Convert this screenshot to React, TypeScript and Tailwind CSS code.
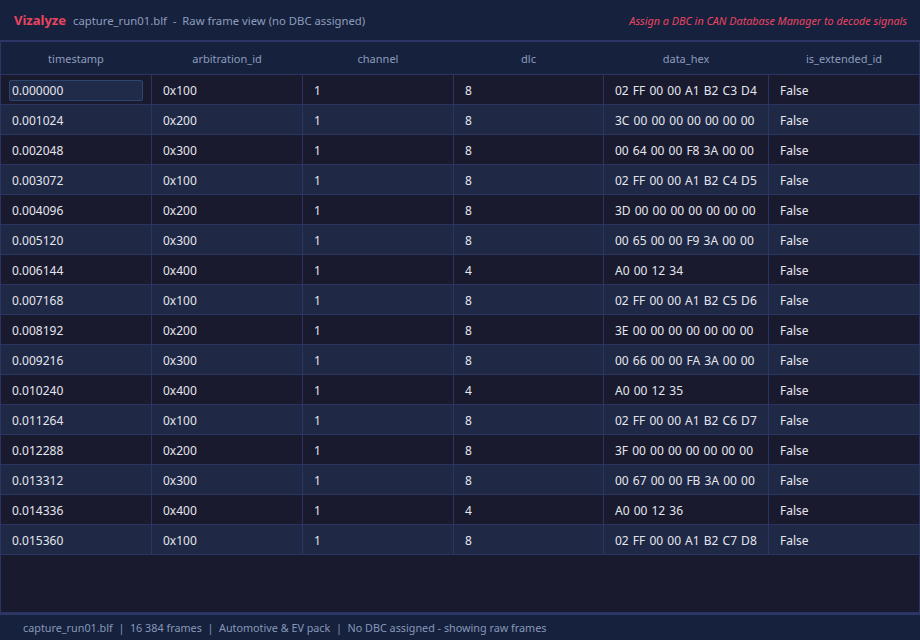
import React from "react";

const rows: [string, string, string, string, string, string][] = [
  ["0.000000", "0x100", "1", "8", "02 FF 00 00 A1 B2 C3 D4", "False"],
  ["0.001024", "0x200", "1", "8", "3C 00 00 00 00 00 00 00", "False"],
  ["0.002048", "0x300", "1", "8", "00 64 00 00 F8 3A 00 00", "False"],
  ["0.003072", "0x100", "1", "8", "02 FF 00 00 A1 B2 C4 D5", "False"],
  ["0.004096", "0x200", "1", "8", "3D 00 00 00 00 00 00 00", "False"],
  ["0.005120", "0x300", "1", "8", "00 65 00 00 F9 3A 00 00", "False"],
  ["0.006144", "0x400", "1", "4", "A0 00 12 34", "False"],
  ["0.007168", "0x100", "1", "8", "02 FF 00 00 A1 B2 C5 D6", "False"],
  ["0.008192", "0x200", "1", "8", "3E 00 00 00 00 00 00 00", "False"],
  ["0.009216", "0x300", "1", "8", "00 66 00 00 FA 3A 00 00", "False"],
  ["0.010240", "0x400", "1", "4", "A0 00 12 35", "False"],
  ["0.011264", "0x100", "1", "8", "02 FF 00 00 A1 B2 C6 D7", "False"],
  ["0.012288", "0x200", "1", "8", "3F 00 00 00 00 00 00 00", "False"],
  ["0.013312", "0x300", "1", "8", "00 67 00 00 FB 3A 00 00", "False"],
  ["0.014336", "0x400", "1", "4", "A0 00 12 36", "False"],
  ["0.015360", "0x100", "1", "8", "02 FF 00 00 A1 B2 C7 D8", "False"],
];

const headers = ["timestamp", "arbitration_id", "channel", "dlc", "data_hex", "is_extended_id"];
const gridCols = "grid grid-cols-[151px_151px_151px_150px_165px_150px]";

export default function App() {
  return (
    <div
      className="w-[920px] h-[640px] flex flex-col bg-[#1a1a2e] overflow-hidden"
      style={{ fontFamily: '"Noto Sans", "Open Sans", sans-serif' }}
    >
      {/* Top bar */}
      <div className="h-[40px] shrink-0 bg-[#16213e] flex items-center pt-[2px] pl-[14px] pr-[13px]">
        <span className="text-[13px] font-bold text-[#e94560]">Vizalyze</span>
        <span className="ml-[7px] text-[11.3px] text-[#8d9dbb] whitespace-pre">capture_run01.blf  -  Raw frame view (no DBC assigned)</span>
        <span className="ml-auto text-[10.8px] italic text-[#e94560]">Assign a DBC in CAN Database Manager to decode signals</span>
      </div>
      <div className="h-[2px] shrink-0 bg-[#2b3666]" />

      {/* Table */}
      <div className="flex-1 flex flex-col border-l border-r border-b border-[#2b3561] bg-[#1a1a2e] min-h-0">
        <div className={`${gridCols} h-[33px] shrink-0 bg-[#16213e] border-b border-[#2b3561]`}>
          {headers.map((h, i) => (
            <div
              key={h}
              className={`flex items-center justify-center pt-[2px] text-[11px] text-[#8d9dbb] ${i < 5 ? "border-r border-[#16213e]" : ""}`}
            >
              {h}
            </div>
          ))}
        </div>
        {rows.map((r, ri) => (
          <div
            key={ri}
            className={`${gridCols} h-[30px] shrink-0 border-b border-[#2b3561] ${ri % 2 === 1 ? "bg-[#1f2844]" : "bg-[#1a1a2e]"}`}
          >
            {r.map((c, ci) => (
              <div
                key={ci}
                className={`flex items-center pt-[2px] text-[12px] text-[#e4e6ee] ${ci === 4 ? "[word-spacing:1px]" : ""} ${ci < 5 ? "border-r border-[#2b3561]" : ""} ${ri === 0 && ci === 0 ? "pl-[8px]" : "pl-[11px]"}`}
              >
                {ri === 0 && ci === 0 ? (
                  <div className="w-[134px] h-[21px] -mt-[1px] flex items-center pt-[1px] pl-[2px] bg-[#1f2b48] border border-[#2c4670] rounded-[2px]">
                    {c}
                  </div>
                ) : (
                  c
                )}
              </div>
            ))}
          </div>
        ))}
        <div className="flex-1" />
      </div>

      {/* Footer */}
      <div className="h-[2px] shrink-0 bg-[#2b3666]" />
      <div className="h-[25px] shrink-0 bg-[#16213e] flex items-center pt-[2px] pl-[23px] text-[10.8px] text-[#8798b8] whitespace-pre">
        capture_run01.blf  |  16 384 frames  |  Automotive &amp; EV pack  |  No DBC assigned - showing raw frames
      </div>
    </div>
  );
}
